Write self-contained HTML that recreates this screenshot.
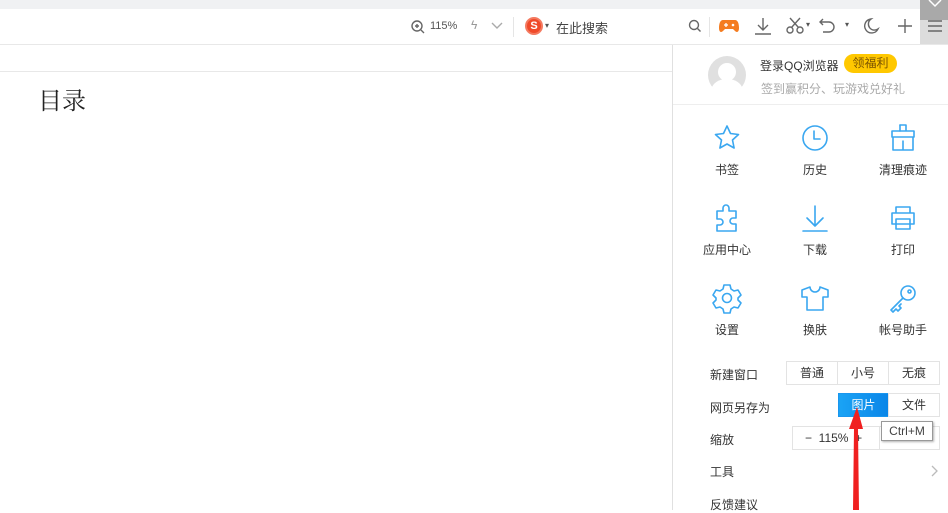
<!DOCTYPE html>
<html><head><meta charset="utf-8"><style>
*{margin:0;padding:0;box-sizing:border-box}
body{width:948px;height:510px;overflow:hidden;background:#fff;font-family:"Liberation Sans","Noto Sans CJK SC",sans-serif;position:relative;color:#333}
.a{position:absolute}
.t{font-size:12px;color:#333;white-space:nowrap}
.lbl{position:absolute;width:80px;text-align:center;font-size:12px;color:#333}
.btn{position:absolute;border:1px solid #e3e3e3;font-size:12px;text-align:center;line-height:22px;background:#fff;color:#333}
svg.i{position:absolute;fill:none;stroke:#3aa7f0;stroke-width:1.6;stroke-linejoin:round;stroke-linecap:round}
svg.tb{position:absolute;fill:none;stroke:#666;stroke-width:1.4}
</style></head><body>
<div class="a" style="left:0;top:0;width:948px;height:9px;background:#f0f1f3"></div>
<div class="a" style="left:920px;top:0;width:28px;height:44px;background:#dcdcdc"></div>
<div class="a" style="left:920px;top:0;width:28px;height:20px;background:#a9a9a9"></div>
<svg class="a" style="left:926px;top:0" width="18" height="10"><path d="M3 0 L9 6 L15 0" stroke="#fff" stroke-width="1.5" fill="none"/></svg>
<div class="a" style="left:0;top:44px;width:948px;height:1px;background:#e8e8e8"></div>
<div class="a" style="left:0;top:71px;width:672px;height:1px;background:#e8e8e8"></div>
<div class="a" style="left:38px;top:81px;font-size:24px;font-family:'Liberation Serif','Noto Serif CJK SC',serif;color:#222">目录</div>

<svg class="tb" style="left:410px;top:19px" width="16" height="16"><circle cx="7" cy="7" r="5"/><path d="M11 11l3 3M5 7h4M7 5v4"/></svg>
<div class="a t" style="left:430px;top:20px;font-size:11px;color:#555">115%</div>
<div class="a t" style="left:471px;top:18px;color:#999">ϟ</div>
<svg class="tb" style="left:491px;top:22px" width="12" height="8"><path d="M1 1l5 5 5-5" stroke="#aaa"/></svg>
<div class="a" style="left:513px;top:17px;width:1px;height:20px;background:#e5e5e5"></div>
<div class="a" style="left:525px;top:17px;width:18px;height:18px;border-radius:50%;background:#f04a2a;border:2px solid #f47a60;color:#fff;font-size:11px;font-weight:bold;text-align:center;line-height:14px">S</div>
<div class="a t" style="left:545px;top:21px;font-size:8px;color:#555">▾</div>
<div class="a t" style="left:556px;top:18px;font-size:13px;color:#444">在此搜索</div>
<svg class="tb" style="left:688px;top:19px" width="14" height="14"><circle cx="6" cy="6" r="4.5"/><path d="M9.5 9.5l3 3"/></svg>
<div class="a" style="left:709px;top:17px;width:1px;height:20px;background:#e5e5e5"></div>
<svg class="a" style="left:719px;top:19px" width="20" height="14"><path d="M4 1h12c3 0 4 4 4 8s-2 5-4 3l-2-2H6l-2 2c-2 2-4 1-4-3s1-8 4-8z" fill="#f47c20"/><circle cx="14" cy="6" r="1.3" fill="#fff"/><path d="M5 6h4M7 4v4" stroke="#fff" stroke-width="1.3"/></svg>
<svg class="tb" style="left:754px;top:17px" width="18" height="18"><path d="M9 1v12M4 8l5 5 5-5M1 17h16"/></svg>
<svg class="tb" style="left:786px;top:17px" width="18" height="18"><circle cx="4" cy="13" r="3"/><circle cx="14" cy="13" r="3"/><path d="M5.5 10.5L14 1M12.5 10.5L4 1"/></svg>
<div class="a t" style="left:806px;top:20px;font-size:8px;color:#555">▾</div>
<svg class="tb" style="left:817px;top:17px" width="18" height="18"><path d="M3 5h9a5 5 0 0 1 0 10H6M6 2L3 5l3 3"/></svg>
<div class="a t" style="left:845px;top:20px;font-size:8px;color:#555">▾</div>
<svg class="tb" style="left:862px;top:17px" width="18" height="18"><path d="M9 2a7 7 0 1 0 7 10A6 6 0 0 1 9 2z"/></svg>
<svg class="tb" style="left:897px;top:18px" width="16" height="16"><path d="M8 1v14M1 8h14"/></svg>
<svg class="tb" style="left:927px;top:19px" width="16" height="14"><path d="M1 2h14M1 7h14M1 12h14"/></svg>

<div class="a" style="left:672px;top:45px;width:276px;height:465px;background:#fff;border-left:1px solid #e0e0e0"></div>
<div class="a" style="left:673px;top:104px;width:275px;height:1px;background:#eee"></div>
<svg class="a" style="left:707px;top:55px" width="40" height="40"><circle cx="20" cy="20" r="19" fill="#e0e0e0"/><circle cx="20" cy="17" r="9" fill="#fff"/><path d="M5 32c3-6 9-8 15-8s12 2 15 8a19 19 0 0 1-30 0z" fill="#fff"/></svg>
<div class="a t" style="left:760px;top:57px;color:#333">登录QQ浏览器</div>
<div class="a" style="left:844px;top:54px;width:53px;height:19px;border-radius:10px;background:#ffc800;font-size:12px;color:#7a5200;text-align:center;line-height:19px">领福利</div>
<div class="a t" style="left:761px;top:80px;color:#aaa">签到赢积分、玩游戏兑好礼</div>

<svg class="i" style="left:713px;top:124px" width="28" height="28"><path d="M14 2l3.5 7.5 8 1-6 5.5 1.6 8L14 20l-7.1 4 1.6-8-6-5.5 8-1z"/></svg>
<svg class="i" style="left:801px;top:124px" width="28" height="28"><circle cx="14" cy="14" r="12"/><path d="M13 7v8h6"/></svg>
<svg class="i" style="left:888px;top:123px" width="30" height="30"><path d="M12 2h6v6M4 8h22v6H4zM5 14v13h20V14M15 18v9"/><path d="M12 8V2"/></svg>
<div class="lbl" style="left:687px;top:161px">书签</div>
<div class="lbl" style="left:775px;top:161px">历史</div>
<div class="lbl" style="left:863px;top:161px">清理痕迹</div>

<svg class="i" style="left:713px;top:203px" width="28" height="30"><path d="M4 8h6V5a3 3 0 0 1 6 0v3h7v7h-3a3 3 0 0 0 0 6h3v7H4V22h3a3 3 0 0 0 0-6H4z"/></svg>
<svg class="i" style="left:801px;top:204px" width="28" height="28"><path d="M14 2v20M6 14l8 8 8-8M2 27h24"/></svg>
<svg class="i" style="left:888px;top:204px" width="30" height="28"><path d="M8 9V3h14v6M4 9h22v11H4zM8 15h14v10H8z"/></svg>
<div class="lbl" style="left:687px;top:241px">应用中心</div>
<div class="lbl" style="left:775px;top:241px">下载</div>
<div class="lbl" style="left:863px;top:241px">打印</div>

<svg class="i" style="left:711px;top:282px" width="32" height="32"><path d="M13 3h6l1 4 3 2 4-1 3 5-3 3v2l3 3-3 5-4-1-3 2-1 4h-6l-1-4-3-2-4 1-3-5 3-3v-2l-3-3 3-5 4 1 3-2z"/><circle cx="16" cy="16" r="4.5"/></svg>
<svg class="i" style="left:800px;top:284px" width="30" height="28"><path d="M10 3l-8 3v7h5v13h16V13h5V6l-8-3a5 5 0 0 1-10 0z"/></svg>
<svg class="i" style="left:888px;top:283px" width="30" height="30"><circle cx="20" cy="10" r="7"/><circle cx="21.5" cy="8.5" r="1.5"/><path d="M15 15L3 27l2 2 3-3 2 2 3-3-2-2 2-2"/></svg>
<div class="lbl" style="left:687px;top:321px">设置</div>
<div class="lbl" style="left:775px;top:321px">换肤</div>
<div class="lbl" style="left:863px;top:321px">帐号助手</div>

<div class="a t" style="left:710px;top:366px">新建窗口</div>
<div class="btn" style="left:786px;top:361px;width:52px;height:24px">普通</div>
<div class="btn" style="left:837px;top:361px;width:52px;height:24px">小号</div>
<div class="btn" style="left:888px;top:361px;width:52px;height:24px">无痕</div>
<div class="a t" style="left:710px;top:399px">网页另存为</div>
<div class="btn" style="left:838px;top:393px;width:51px;height:24px;background:linear-gradient(90deg,#1aa3f5,#0a86e8);border-color:#1a96ee;color:#fff">图片</div>
<div class="btn" style="left:888px;top:393px;width:52px;height:24px">文件</div>
<div class="a t" style="left:710px;top:431px">缩放</div>
<div class="btn" style="left:792px;top:426px;width:88px;height:24px;text-align:left;padding-left:12px">−&nbsp;&nbsp;115%&nbsp;&nbsp;+</div>
<div class="btn" style="left:879px;top:426px;width:61px;height:24px"></div>
<div class="a" style="left:881px;top:421px;width:52px;height:20px;border:1px solid #999;background:#fff;font-size:12px;line-height:18px;text-align:center;color:#444;box-shadow:1px 1px 2px rgba(0,0,0,.3)">Ctrl+M</div>
<div class="a t" style="left:710px;top:463px">工具</div>
<svg class="a" style="left:931px;top:465px" width="8" height="12"><path d="M1 1l5 5-5 5" stroke="#bbb" fill="none" stroke-width="1.3"/></svg>
<div class="a t" style="left:710px;top:496px">反馈建议</div>

<svg class="a" style="left:845px;top:405px" width="24" height="105"><path d="M12 2L4 24h5l-1 81h6l-1-81h5z" fill="#f02020"/></svg>
</body></html>
